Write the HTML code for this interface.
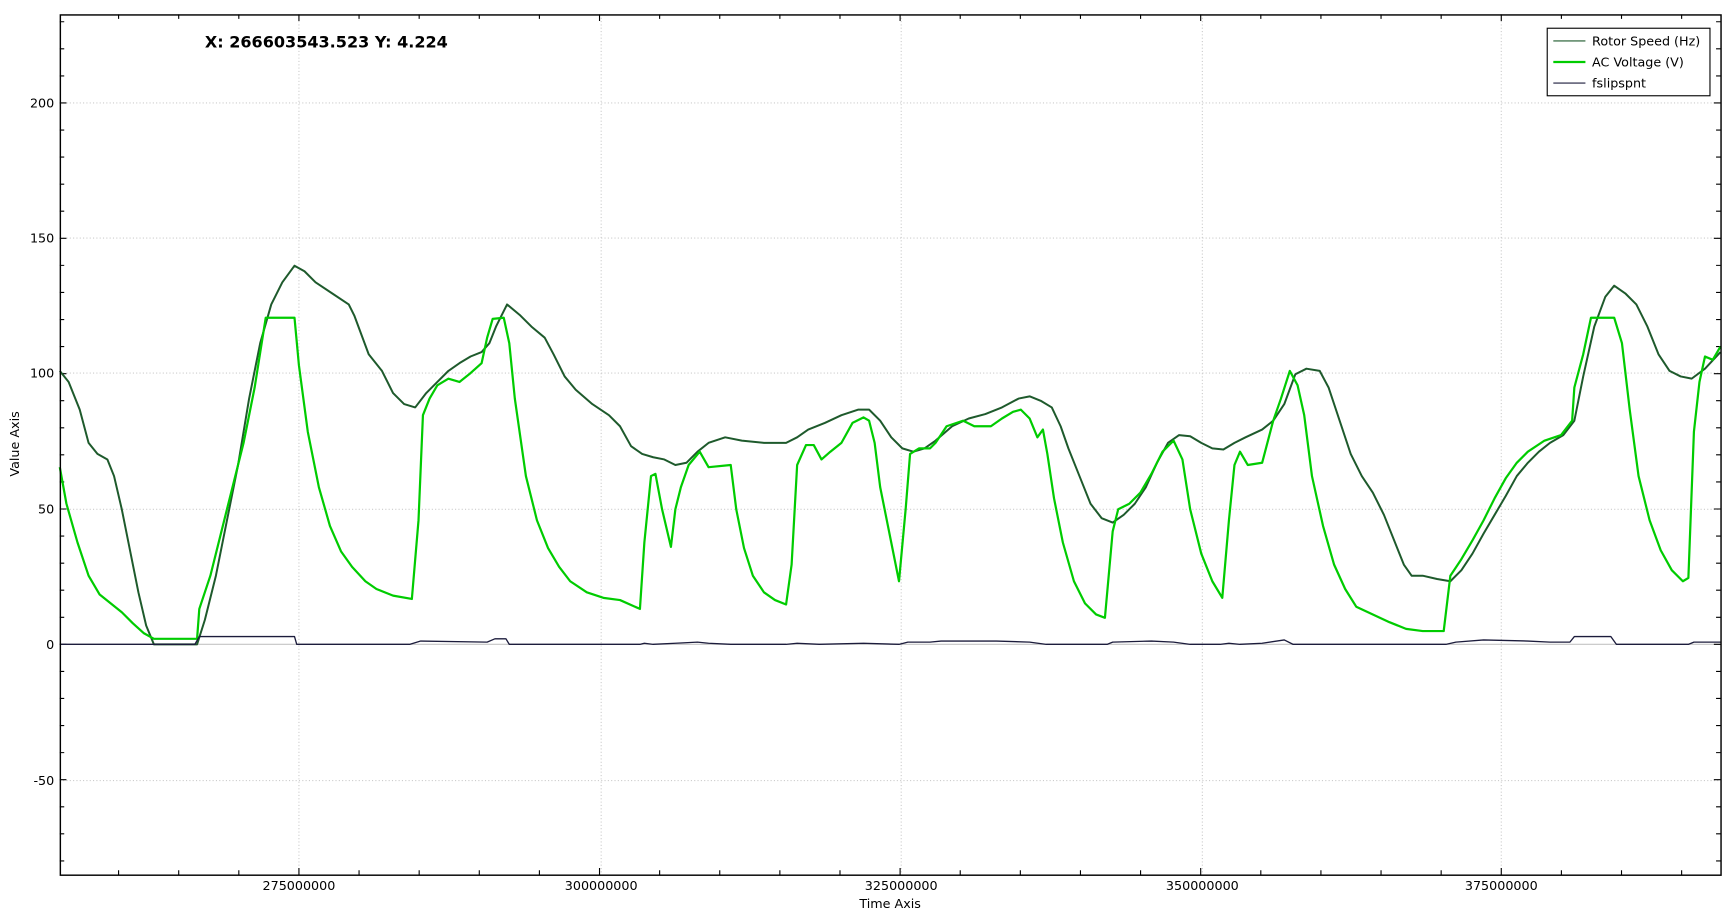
<!DOCTYPE html>
<html><head><meta charset="utf-8"><style>
html,body{margin:0;padding:0;background:#fff;width:1736px;height:918px;overflow:hidden}
svg{display:block}
text{font-family:"DejaVu Sans","Liberation Sans",sans-serif;fill:#000}
</style></head><body>
<svg width="1736" height="918" viewBox="0 0 1568 829.17" xmlns="http://www.w3.org/2000/svg">
<rect x="0" y="0" width="1568" height="830" fill="#fff"/>
<g stroke="#cccccc" stroke-width="1" stroke-dasharray="1,2">
<line x1="54" y1="93" x2="1554" y2="93"/>
<line x1="54" y1="215" x2="1554" y2="215"/>
<line x1="54" y1="337" x2="1554" y2="337"/>
<line x1="54" y1="460" x2="1554" y2="460"/>
<line x1="54" y1="705" x2="1554" y2="705"/>
<line x1="270" y1="13" x2="270" y2="790"/>
<line x1="543" y1="13" x2="543" y2="790"/>
<line x1="814" y1="13" x2="814" y2="790"/>
<line x1="1086" y1="13" x2="1086" y2="790"/>
<line x1="1356" y1="13" x2="1356" y2="790"/>
</g>
<line x1="54" y1="582" x2="1554" y2="582" stroke="#c4c4c4" stroke-width="1"/>
<g id="ticks" stroke="#000" stroke-width="1"></g>

<polyline fill="none" stroke="#1e5a2c" stroke-width="1.8" stroke-linejoin="round" points="54,335 62,345 72,370 80,400 88,410 97,415 103,430 110,460 118,500 125,535 132,565 139,582 178,582 185,560 195,520 205,470 215,420 225,360 235,310 245,275 255,255 266,240 275,245 285,255 300,265 315,275 320,285 333,320 345,335 355,355 365,365 375,368 385,355 395,345 405,335 415,328 425,322 435,318 442,310 448,295 458,275 470,285 480,295 492,305 500,320 510,340 520,352 535,365 550,375 560,385 570,403 580,410 590,413 600,415 610,420 620,418 630,408 640,400 655,395 670,398 690,400 710,400 720,395 730,388 745,382 760,375 775,370 785,370 795,380 805,395 815,405 825,408 835,405 845,398 860,385 875,378 890,374 905,368 920,360 930,358 940,362 950,368 958,385 965,405 975,430 985,455 995,468 1005,472 1015,465 1025,455 1035,440 1045,418 1055,400 1065,393 1075,394 1085,400 1095,405 1105,406 1115,400 1125,395 1140,388 1150,380 1160,365 1170,338 1180,333 1192,335 1200,350 1210,380 1220,410 1230,430 1240,445 1250,465 1260,490 1268,510 1275,520 1285,520 1298,523 1310,525 1320,515 1330,500 1340,482 1350,465 1360,448 1370,430 1380,418 1390,408 1400,400 1412,393 1422,380 1430,340 1440,295 1450,268 1458,258 1468,265 1478,275 1488,295 1498,320 1508,335 1518,340 1528,342 1540,333 1554,318"/>

<polyline fill="none" stroke="#00cc00" stroke-width="2" stroke-linejoin="round" points="54,422 60,455 70,490 80,520 90,537 100,545 110,553 120,563 130,572 139,577 178,577 180,550 190,520 200,480 210,440 220,400 230,350 240,287 266,287 270,330 278,390 288,440 298,475 308,498 318,512 330,525 340,532 355,538 372,541 378,470 382,375 388,360 395,348 405,342 415,345 425,337 435,328 440,305 445,288 455,287 460,310 465,360 475,430 485,470 495,495 505,512 515,525 530,535 545,540 560,542 578,550 582,490 588,430 592,428 598,460 606,494 610,460 615,440 622,420 632,408 640,422 660,420 665,460 672,495 680,520 690,535 700,542 710,546 715,510 720,420 728,402 735,402 742,415 750,408 760,400 770,382 780,377 785,380 790,400 795,440 805,490 812,525 818,460 822,410 830,405 840,405 845,400 855,385 870,380 880,385 895,385 905,378 915,372 922,370 930,378 937,395 942,388 946,410 952,450 960,490 970,525 980,545 990,555 998,558 1005,480 1010,460 1020,455 1030,445 1040,428 1050,408 1060,398 1068,415 1075,460 1085,500 1095,525 1104,540 1110,470 1115,420 1120,408 1127,420 1140,418 1150,380 1157,360 1165,335 1172,348 1178,375 1185,430 1195,475 1205,510 1215,532 1225,548 1240,555 1255,562 1270,568 1285,570 1304,570 1310,520 1320,505 1330,488 1340,470 1350,450 1360,432 1370,418 1380,408 1395,398 1410,393 1420,380 1422,350 1430,320 1437,287 1458,287 1465,310 1472,370 1480,430 1490,470 1500,497 1510,515 1520,525 1525,522 1530,390 1535,345 1540,322 1547,325 1554,313"/>

<polyline fill="none" stroke="#1c1c3c" stroke-width="1.2" stroke-linejoin="round" points="54,582 176,582 180,575 266,575 268,582 370,582 380,579 440,580 447,577 457,577 460,582 578,582 582,581 590,582 610,581 630,580 640,581 660,582 710,582 720,581 740,582 780,581 812,582 820,580 840,580 850,579 900,579 930,580 945,582 1000,582 1005,580 1040,579 1060,580 1075,582 1102,582 1110,581 1120,582 1140,581 1160,578 1168,582 1306,582 1315,580 1340,578 1380,579 1400,580 1418,580 1422,575 1455,575 1460,582 1525,582 1530,580 1554,580"/>

<rect x="54.5" y="13.5" width="1500" height="777" fill="none" stroke="#000" stroke-width="1.3"/>

<g font-size="11.5" text-anchor="end">
<text x="49" y="97">200</text>
<text x="49" y="219">150</text>
<text x="49" y="341">100</text>
<text x="49" y="464">50</text>
<text x="49" y="586">0</text>
<text x="49" y="709">-50</text>
</g>
<g font-size="11.5" text-anchor="middle">
<text x="270" y="804">275000000</text>
<text x="543" y="804">300000000</text>
<text x="814" y="804">325000000</text>
<text x="1086" y="804">350000000</text>
<text x="1356" y="804">375000000</text>
<text x="804" y="820">Time Axis</text>
<text transform="translate(17,401) rotate(-90)">Value Axis</text>
</g>
<text x="185" y="43" font-size="14.5" font-weight="bold">X: 266603543.523 Y: 4.224</text>

<rect x="1397.5" y="25.5" width="147" height="61" fill="#fff" stroke="#000" stroke-width="1"/>
<line x1="1403" y1="37" x2="1432" y2="37" stroke="#1e5a2c" stroke-width="1"/>
<line x1="1403" y1="56" x2="1432" y2="56" stroke="#00cc00" stroke-width="2"/>
<line x1="1403" y1="75" x2="1432" y2="75" stroke="#1c1c3c" stroke-width="1"/>
<g font-size="11.5">
<text x="1438" y="41">Rotor Speed (Hz)</text>
<text x="1438" y="60">AC Voltage (V)</text>
<text x="1438" y="79">fslipspnt</text>
</g>
</svg>
<script>
(function(){
var g=document.getElementById('ticks'),d='';
var step=271.5/5;
for(var i=-4;i<=24;i++){var x=270+i*step;if(x<=55||x>=1553)continue;var L=(i%5===0)?6:4;
d+='M'+x+' 790V'+(790-L)+'M'+x+' 13V'+(13+L);}
var ys=24.45;
for(var j=-8;j<=23;j++){var y=582-j*ys;if(y<=14||y>=789)continue;var L=(j%5===0)?6:4;
d+='M54 '+y+'H'+(54+L)+'M1554 '+y+'H'+(1554-L);}
var p=document.createElementNS('http://www.w3.org/2000/svg','path');
p.setAttribute('d',d);p.setAttribute('fill','none');g.appendChild(p);
})();
</script>
</body></html>
